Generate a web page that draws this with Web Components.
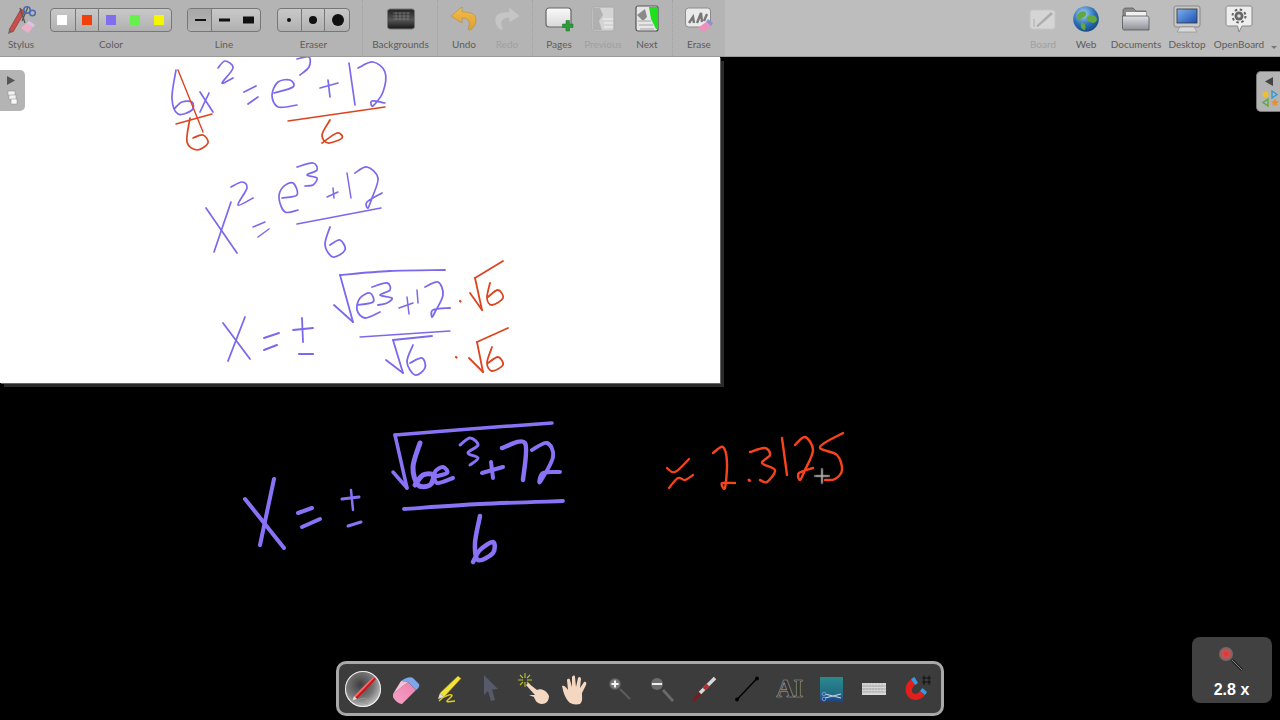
<!DOCTYPE html>
<html lang="en"><head><meta charset="utf-8"><title>OpenBoard</title>
<style>
html,body{margin:0;padding:0;width:1280px;height:720px;overflow:hidden;background:#000}
body{display:flex;flex-direction:column;font-family:Lato,"Open Sans","Liberation Sans",sans-serif}
</style></head><body>
<ob-toolbar>
  <ob-group slot="left" style="--pad:0 13px 0 0">
    <ob-tool label="Stylus" w="42" icon="stylus"></ob-tool>
    <ob-seg label="Color" cells="25,24,73" style="margin-left:8px" sel="-1">
      <ob-swatch c="#fff" x="6"></ob-swatch><ob-swatch c="#f2400c" x="31"></ob-swatch><ob-swatch c="#7f6ff0" x="55"></ob-swatch><ob-swatch c="#66f04c" x="79"></ob-swatch><ob-swatch c="#f6f600" x="103"></ob-swatch>
    </ob-seg>
    <ob-seg label="Line" cells="25,49" style="margin-left:15px" sel="0">
      <ob-swatch c="#111" x="7" w="11" h="2"></ob-swatch><ob-swatch c="#111" x="31" w="11" h="3"></ob-swatch><ob-swatch c="#111" x="55" w="11" h="7"></ob-swatch>
    </ob-seg>
    <ob-seg label="Eraser" cells="25,23,25" style="margin-left:16px" sel="-1">
      <ob-swatch c="#111" x="9" w="4" h="4" r="50%"></ob-swatch><ob-swatch c="#111" x="31" w="8" h="8" r="50%"></ob-swatch><ob-swatch c="#111" x="54" w="12" h="12" r="50%"></ob-swatch>
    </ob-seg>
  </ob-group>
  <ob-group slot="left" sep><ob-tool label="Backgrounds" w="75" icon="backgrounds"></ob-tool></ob-group>
  <ob-group slot="left" sep style="--pad:0 9px 0 0"><ob-tool label="Undo" w="52" icon="undo"></ob-tool><ob-tool label="Redo" w="34" icon="redo" dim></ob-tool></ob-group>
  <ob-group slot="left" sep><ob-tool label="Pages" w="52" icon="pages"></ob-tool><ob-tool label="Previous" w="36" icon="previous" dim></ob-tool><ob-tool label="Next" w="52" icon="next"></ob-tool></ob-group>
  <ob-group slot="left" sep><ob-tool label="Erase" w="52" icon="erase"></ob-tool></ob-group>
  <ob-group slot="right" sep-end>
    <ob-tool label="Board" w="40" icon="board" dim></ob-tool><ob-tool label="Web" w="46" icon="web"></ob-tool><ob-tool label="Documents" w="54" icon="documents"></ob-tool><ob-tool label="Desktop" w="48" icon="desktop"></ob-tool><ob-tool label="OpenBoard" w="56" icon="openboard"></ob-tool><ob-more></ob-more>
  </ob-group>
</ob-toolbar>
<ob-stage>
  <ob-ink></ob-ink>
  <ob-sidetab side="left" icon="pagesTab"></ob-sidetab>
  <ob-sidetab side="right" icon="libTab"></ob-sidetab>
  <ob-dock>
    <ob-dockicon icon="dpen" sel></ob-dockicon><ob-dockicon icon="deraser"></ob-dockicon><ob-dockicon icon="dmarker"></ob-dockicon><ob-dockicon icon="darrow"></ob-dockicon><ob-dockicon icon="dtap"></ob-dockicon><ob-dockicon icon="dhand"></ob-dockicon><ob-dockicon icon="dzin"></ob-dockicon><ob-dockicon icon="dzout"></ob-dockicon><ob-dockicon icon="dlaser"></ob-dockicon><ob-dockicon icon="dline"></ob-dockicon><ob-dockicon icon="dtext"></ob-dockicon><ob-dockicon icon="dcapture"></ob-dockicon><ob-dockicon icon="dkeys"></ob-dockicon><ob-dockicon icon="dmagnet"></ob-dockicon>
  </ob-dock>
  <ob-zoom value="2.8 x"></ob-zoom>
</ob-stage>
<script>
const svg=(w,h,b)=>`<svg xmlns="http://www.w3.org/2000/svg" width="${w}" height="${h}" viewBox="0 0 ${w} ${h}" style="display:block">${b}</svg>`;
const ICONS={
stylus:svg(30,30,`<path d="M3 26 L15 5 L19 7.500 L7 28 Z" fill="#c8504a" stroke="#8a3a38" stroke-width=".7"/><path d="M3 26 L2 30 L6.500 28Z" fill="#666"/><path d="M14 4 L19 19 M22 3 L16 17" stroke="#555" stroke-width="1.300"/><circle cx="21" cy="6" r="3.200" fill="none" stroke="#4a6ab0" stroke-width="1.500"/><circle cx="26.500" cy="9" r="2.800" fill="none" stroke="#4a6ab0" stroke-width="1.500"/><path d="M15 24 L23 17 L29 21 L22 29 Z" fill="#eeb0c8"/><path d="M23 17 L29 21 L27 23 L21 19Z" fill="#d0c8e4"/>`),
backgrounds:svg(30,24,`<defs><linearGradient id="bg" x1="0" y1="0" x2="0" y2="1"><stop offset="0" stop-color="#222"/><stop offset=".55" stop-color="#555"/><stop offset="1" stop-color="#161616"/></linearGradient></defs><rect x="1.500" y="2" width="27" height="20" rx="2.500" fill="url(#bg)" stroke="#777"/><path d="M7 6H24M7 9H24M7 12H23M10 5V13M14 5V13M18 5V13M22 5V13" stroke="#8c8c8c" stroke-width=".5"/>`),
undo:svg(30,28,`<defs><linearGradient id="un" x1="0" y1="0" x2="0" y2="1"><stop offset="0" stop-color="#f4bd48"/><stop offset="1" stop-color="#dca033"/></linearGradient></defs><path d="M13 2 L2 11 L13 18 L13 13 C20 13 22 17 19 24 C20 27 27 22 27 15 C27 8 20 7 13 7 Z" fill="url(#un)" stroke="#b98a35" stroke-width=".6"/>`),
redo:svg(30,28,`<path d="M17 2 L28 11 L17 18 L17 13 C10 13 8 17 11 24 C10 27 3 22 3 15 C3 8 10 7 17 7 Z" fill="#cacaca" stroke="#b4b4b4" stroke-width=".6"/>`),
pages:svg(30,28,`<defs><linearGradient id="pg" x1="0" y1="0" x2="0" y2="1"><stop offset="0" stop-color="#fafafa"/><stop offset="1" stop-color="#d8d8d8"/></linearGradient></defs><rect x="2" y="3" width="25" height="19" rx="3" fill="url(#pg)" stroke="#666" stroke-width="1.200"/><path d="M20.500 19.500h3.500v-3.500h3.500v3.500H31v3.500h-3.500v3.500H24V23h-3.500z" transform="translate(-2 -.5)" fill="#2f9a3a" stroke="#1c6d25" stroke-width=".5"/>`),
previous:svg(26,28,`<rect x="2" y="2" width="22" height="24" rx="2" fill="#dcdcdc" stroke="#a8a8a8"/><path d="M3 3 H10 L13 10 L9 16 L12 25 H3Z" fill="#b0b0b0"/><path d="M13 14H23M14 18H23M14 22H23" stroke="#f6f6f6" stroke-width="1.600"/>`),
next:svg(26,28,`<rect x="2" y="1" width="22" height="25" rx="2" fill="#e6e6e6" stroke="#555" stroke-width="1.200"/><path d="M15 2 H23 V24 H22 L17 14 Z" fill="#1ee01e"/><path d="M3 10 L11 4 L13 12 L9 16Z" fill="#8a8a8a"/><path d="M4 16H17M5 20H19M6 24H20" stroke="#bbb" stroke-width="1.600"/>`),
erase:svg(30,28,`<rect x="1.500" y="3" width="25" height="19" rx="3" fill="#eaeaea" stroke="#8a8a8a"/><path d="M5 18 L9 12 L10 18 M13 18 L17 8 L18 17 M20 16 L23 9" fill="none" stroke="#777" stroke-width="2.400"/><path d="M14 23 L22 17 L27 21 L20 27Z" fill="#ee90bd"/><path d="M22 17 L27 21 L29 18 L24 14Z" fill="#8f8fd8"/>`),
board:svg(28,24,`<rect x="1" y="3" width="25" height="19" rx="2.500" fill="#dcdcdc" stroke="#c8c8c8"/><path d="M7 19 L22 5 L24 7 L9 20Z" fill="#a9a9a9"/><path d="M5 12 V20" stroke="#a9a9a9"/>`),
web:svg(28,28,`<defs><radialGradient id="gl" cx=".4" cy=".3" r=".8"><stop offset="0" stop-color="#a4d4f4"/><stop offset=".55" stop-color="#2c6fb8"/><stop offset="1" stop-color="#123f78"/></radialGradient></defs><circle cx="14" cy="14" r="12.800" fill="url(#gl)"/><path d="M7 8 C11 5 15 6 14 10 C12 13 9 12 8 16 C5 15 4 11 7 8Z M15 12 C19 9 25 10 25 15 C23 19 20 18 18 17 C15 17 14 14 15 12Z M9 18 C12 17 15 20 13 25 C10 25 8 22 9 18Z" fill="#63a83c"/>`),
documents:svg(30,26,`<defs><linearGradient id="fd" x1="0" y1="0" x2="0" y2="1"><stop offset="0" stop-color="#e0e0e6"/><stop offset="1" stop-color="#8f8f98"/></linearGradient></defs><path d="M2 5 C2 3 3 2 5 2 H12 L15 5 H25 V10 H2Z" fill="#8a8a8a" stroke="#555" stroke-width=".7"/><rect x="5" y="6" width="20" height="8" fill="#f0f0f0"/><path d="M1.500 10 H26 C27.500 10 28 11 28 12 V24 H3 C2 24 1.500 23 1.500 22Z" fill="url(#fd)" stroke="#555" stroke-width=".8"/>`),
desktop:svg(28,28,`<rect x="1" y="1" width="26" height="21" rx="2" fill="#c8c8c8" stroke="#888"/><defs><linearGradient id="sc" x1="0" y1="0" x2="1" y2="1"><stop offset="0" stop-color="#7eb1ec"/><stop offset="1" stop-color="#1c4fb0"/></linearGradient></defs><rect x="4" y="4" width="20" height="14" fill="url(#sc)" stroke="#333" stroke-width=".8"/><path d="M7 22 L4 27 H24 L21 22Z" fill="#d8d8d8" stroke="#888" stroke-width=".6"/>`),
openboard:svg(28,28,`<path d="M3 1 H25 C26.500 1 27 2 27 3 V19 C27 20 26.500 21 25 21 H17 L14 27 L12.500 21 H3 C2 21 1 20 1 19 V3 C1 2 2 1 3 1Z" fill="#eee" stroke="#888"/><circle cx="14" cy="11" r="4.500" fill="#666"/><circle cx="14" cy="11" r="6.500" fill="none" stroke="#666" stroke-width="2" stroke-dasharray="2.500 2.600"/><circle cx="14" cy="11" r="1.800" fill="#ddd"/>`),
pagesTab:svg(24,41,`<path d="M7 6 L7 15 L15 10.500Z" fill="#555"/><rect x="8" y="21" width="7" height="4.500" fill="#f2f2f2" stroke="#888" stroke-width=".5"/><rect x="9" y="25" width="7" height="4.500" fill="#f2f2f2" stroke="#888" stroke-width=".5"/><rect x="11" y="29" width="6" height="5" fill="#f8f8f8" stroke="#888" stroke-width=".5"/>`),
libTab:svg(24,41,`<path d="M16 5 L16 14 L8 9.500Z" fill="#444"/><circle cx="8.500" cy="22.500" r="3" fill="#e8c030"/><path d="M15 19 L15 26 L20 22.500Z" fill="none" stroke="#2a9ad8" stroke-width="1.300"/><path d="M11 27 L11 34 L6 30.500Z" fill="none" stroke="#5aa83a" stroke-width="1.300"/><path d="M18 26.500 L19.300 29 L22 29.400 L20 31.300 L20.500 34 L18 32.700 L15.500 34 L16 31.300 L14 29.400 L16.700 29Z" fill="#e8902c"/>`),
dpen:svg(34,34,`<path d="M8 24 L27 5 L30 7 L11 27 Z" fill="#c8151a"/><path d="M27 5 L28.300 6 L9.500 25.500 L8 24Z" fill="#f26a6a"/><path d="M8 24 L6.500 28.500 L11 27Z" fill="#e0e0e0"/><path d="M10 29 C15 26 22 25 21 28 C19 31 15 30 22 32" fill="none" stroke="#999" stroke-width=".9"/>`),
deraser:svg(34,34,`<defs><linearGradient id="er" x1="0" y1="1" x2="1" y2="0"><stop offset="0" stop-color="#f7a2c4"/><stop offset="1" stop-color="#ec7fae"/></linearGradient></defs><path d="M4 22 L19 10 L27 18 L13 32 C10 32 6 29 4 25Z" fill="url(#er)"/><path d="M12 9 C16 6 22 4 24 6 L30 12 C31 14 29 17 27 18 L19 10Z" fill="#7da7e8"/><path d="M19 10 L12 9 L4 22Z" fill="#f6c0d8"/>`),
dmarker:svg(34,34,`<path d="M9 21 L27 4 L30 6.500 L13 25 Z" fill="#f2e23a" stroke="#8f8420" stroke-width=".5"/><path d="M9 21 L7 27 L13 25Z" fill="#ddd"/><path d="M8 29 C15 22 24 21 20 25 C16 29 12 31 24 29" fill="none" stroke="#e6cc20" stroke-width="1.500"/>`),
darrow:svg(34,34,`<path d="M10 3 L24 17 L18 17.500 L21 28 L17 29 L14 19 L10 23Z" fill="#565a6a"/>`),
dtap:svg(36,36,`<g stroke="#b8c030" stroke-width="1.100"><path d="M9 2V7M9 11V16M2 9H7M11 9H16M4 4L7 7M14 4L11 7M4 14L7 11M14 14L11 11"/></g><path d="M12 12 L21 19 C25 17 31 20 33 25 C33 30 30 33 26 33 C21 33 19 29 18 26 L13 24 L19 24 L10 14Z" fill="#f4d8c2"/>`),
dhand:svg(34,34,`<path d="M9 29 C5 24 4 18 3 14 C5 13 7 15 9 18 L8 8 C9 6 11 7 11 8 L13 15 L13 5 C14 3 16 3 16 5 L17 15 L19 6 C20 4 22 5 22 7 L21 16 L25 10 C27 9 28 11 27 13 L23 21 C23 26 24 29 21 32 C16 33 11 32 9 29Z" fill="#f3d7c0"/>`),
dzin:svg(34,34,`<circle cx="13" cy="12" r="5.500" fill="#777" stroke="#555"/><path d="M13 8.500V15.500M9.500 12H16.500" stroke="#f4f4f4" stroke-width="2"/><path d="M18 17 L28 27" stroke="#5c5c5c" stroke-width="2.200"/>`),
dzout:svg(34,34,`<circle cx="13" cy="12" r="6" fill="#6c6c6c"/><path d="M8 12H18" stroke="#eee" stroke-width="2"/><path d="M19 18 L29 29" stroke="#6a6a6a" stroke-width="2.800"/>`),
dlaser:svg(34,34,`<path d="M6 29 L15 19" stroke="#7a1c1c" stroke-width="3"/><path d="M13 21 L28 6" stroke="#d8d8d8" stroke-width="3.500"/><path d="M17 17 L21 13" stroke="#b03030" stroke-width="3.500"/>`),
dline:svg(34,34,`<path d="M7 27.500 L27 6.500" stroke="#000" stroke-width="1.400"/><circle cx="7" cy="27.500" r="1.900" fill="#000"/><circle cx="27" cy="6.500" r="1.900" fill="#000"/>`),
dtext:`<span style="display:block;font:bold 25px/34px 'Liberation Serif',serif;color:#333;-webkit-text-stroke:.6px #a0a0a0;text-align:center;width:34px;letter-spacing:-1px">AI</span>`,
dcapture:svg(34,34,`<defs><linearGradient id="cp" x1="0" y1="0" x2="0" y2="1"><stop offset="0" stop-color="#2a8a90"/><stop offset=".7" stop-color="#226a80"/><stop offset="1" stop-color="#1f3f88"/></linearGradient></defs><rect x="5" y="5" width="23" height="25" fill="url(#cp)"/><path d="M10 26 L26 22 M10 22 L26 26" stroke="#c8d4e8" stroke-width="1.100"/><circle cx="9" cy="27" r="1.800" fill="none" stroke="#8090d8"/><circle cx="9" cy="22" r="1.800" fill="none" stroke="#8090d8"/>`),
dkeys:svg(34,34,`<rect x="5" y="11" width="24" height="12" fill="#d8d8d8"/><path d="M5 14H29M5 17H29M5 20H29" stroke="#999" stroke-width=".7"/><path d="M7 11V20M10 11V20M13 11V20M16 11V20M19 11V20M22 11V20M25 11V20" stroke="#999" stroke-width=".5" stroke-dasharray="1.500 1"/>`),
dmagnet:svg(34,34,`<path d="M12 7 C6 10 4 17 7 23 C11 30 21 29 25 23 L20 19 C18 22 15 23 13 21 C11 19 12 15 15 13Z" fill="#e1201c"/><path d="M11 7 L15 13 L18 11 L14.500 5Z" fill="#3a9ae0"/><path d="M20 19 L25 23 L27 20 L22.500 16Z" fill="#3a9ae0"/><path d="M22 6H31M22 10H31M24 3.500V13M29 3.500V13" stroke="#111" stroke-width="1"/>`),
hudGlass:svg(40,40,`<defs><radialGradient id="hg"><stop offset="0" stop-color="#f02a2a"/><stop offset=".5" stop-color="#c85050"/><stop offset="1" stop-color="#6a6a6a"/></radialGradient></defs><circle cx="14" cy="13" r="7" fill="url(#hg)"/><path d="M20 19 L30 29" stroke="#222" stroke-width="3"/><path d="M20 19 L30 29" stroke="#888" stroke-width="1"/>`)
};
function def(name,css,html,init){
  customElements.define(name,class extends HTMLElement{
    connectedCallback(){
      if(this.shadowRoot)return;
      const r=this.attachShadow({mode:'open'});
      r.innerHTML=`<style>${css}</style>${typeof html==='function'?html(this):html}`;
      if(init)init(this,r);
    }
  });
}
def('ob-toolbar',`:host{display:flex;flex:0 0 57px;height:57px;box-sizing:border-box;background:#bdbdbd;border-bottom:1px solid #999;color:#555}
.l{display:flex;background:#b4b4b4}.s{flex:1}.r{display:flex}`,
`<div class="l"><slot name="left"></slot></div><div class="s"></div><div class="r"><slot name="right"></slot></div>`);
def('ob-group',`:host{display:flex;height:56px;padding:var(--pad,0);box-sizing:border-box}
:host([sep]){border-left:1px dotted #a2a2a2;margin-left:-1px}
:host([sep]:last-of-type){border-right:1px dotted #a2a2a2}`,`<slot></slot>`);
def('ob-tool',`:host{display:flex;flex-direction:column;align-items:center;height:56px;width:var(--w);font-size:10px;line-height:14px;color:#5c5c5c;white-space:nowrap}
:host([dim]){color:#a0a0a0}.i{height:30px;margin-top:4px;display:flex;align-items:center;justify-content:center}
:host([dim]) .i{opacity:.8}.t{margin-top:3px;display:flex;justify-content:center;width:100%}`,
e=>`<div class="i">${ICONS[e.getAttribute('icon')]}</div><div class="t">${e.getAttribute('label')}</div>`,
e=>e.style.setProperty('--w',e.getAttribute('w')+'px'));
def('ob-seg',`:host{display:flex;flex-direction:column;align-items:center;height:56px;font-size:10px;line-height:14px;color:#5c5c5c}
.b{margin-top:8px;height:24px;box-sizing:border-box;border:1px solid #777;border-radius:4px;position:relative;display:flex;overflow:hidden;background:linear-gradient(#c8c8c8,#bcbcbc 55%,#b0b0b0)}
.c{border-right:1px solid #777;box-sizing:border-box;height:100%}.c:last-of-type{border-right:0}
.c.on{background:linear-gradient(#a8a8a8,#b4b4b4)}.t{margin-top:5px}`,
e=>{const cs=e.getAttribute('cells').split(',').map(Number),sel=+e.getAttribute('sel');const tot=cs.reduce((a,b)=>a+b,0);
return `<div class="b" style="width:${tot}px">${cs.map((w,i)=>`<div class="c${i===sel?' on':''}" style="width:${w}px"></div>`).join('')}<slot></slot></div><div class="t">${e.getAttribute('label')}</div>`});
def('ob-swatch',`:host{position:absolute;top:50%;left:var(--x);width:var(--sw);height:var(--sh);background:var(--c);border-radius:var(--r);transform:translateY(-50%)}`,``,
e=>{const g=a=>e.getAttribute(a);const w=g('w')||10,h=g('h')||10;e.style.cssText=`--x:${g('x')-0}px;--sw:${w}px;--sh:${h}px;--c:${g('c')};--r:${g('r')||0}`});
def('ob-more',`:host{display:flex;width:13px;height:56px;align-items:flex-end;justify-content:center;padding-bottom:7px;box-sizing:border-box}
i{display:block;width:0;height:0;border:3.500px solid transparent;border-top:3.500px solid #777;border-bottom:0}`,`<i></i>`);
def('ob-stage',`:host{display:block;position:relative;flex:1;background:#000;overflow:hidden}
.page{position:absolute;left:0;top:0;width:720px;height:325.500px;background:#fff;box-shadow:1px 1px 0 #666,4px 4px 0 #2a2a2a}`,
`<div class="page"></div><slot></slot>`);
const P='#7b69ec',R='#dc4420',P2='#8a72f6',R2='#f8431c';
const STROKES=[
[P,1.7,[[176,70],[172,98],[178,114],[192,110],[192,102],[182,102],[175,108]]],
[P,1.7,[[200,92],[213,112]]],[P,1.7,[[209,93],[200,112]]],
[P,1.7,[[218,68],[225,61],[233,68],[222,83],[233,78]]],
[P,1.7,[[244,92],[256,86]]],[P,1.7,[[248,104],[258,97]]],
[P,1.7,[[274,93],[293,87],[290,80],[278,82],[272,95],[278,107],[297,105]]],
[P,1.7,[[297,59],[309,57],[309,67],[300,75]]],
[P,1.7,[[320,88],[338,83]]],[P,1.7,[[328,80],[330,97]]],[P,1.7,[[349,63],[355,105]]],
[P,1.7,[[358,68],[373,62],[385,72],[383,92],[373,106],[372,101],[385,103]]],
[R,1.4,[[176,124],[212,114]]],[R,1.4,[[178,70],[203,132]]],
[R,1.7,[[190,118],[187,142],[197,150],[208,143],[203,135],[193,138]]],
[R,1.4,[[288,121],[385,107]]],
[R,1.7,[[330,120],[322,135],[328,143],[342,138],[337,133],[322,143]]],
[P,1.7,[[206,208],[237,253]]],[P,1.7,[[231,202],[214,252]]],
[P,1.7,[[231,187],[242,182],[247,188],[238,205],[253,198]]],
[P,1.500,[[253,227],[265,222]]],[P,1.500,[[258,237],[269,229]]],
[P,1.700,[[282,198],[297,195],[293,183],[283,187],[279,198],[285,212],[298,210]]],
[P,1.700,[[297,167],[313,163],[317,170],[307,175],[317,178],[313,185],[305,186]]],
[P,1.500,[[327,197],[338,192]]],[P,1.500,[[333,188],[334,198]]],[P,1.500,[[347,173],[351,198]]],
[P,1.700,[[355,173],[367,167],[378,178],[372,198],[368,208],[367,202],[382,193]]],
[P,1.700,[[297,224],[381,208]]],
[P,1.800,[[330,227],[325,245],[333,257],[345,250],[340,240],[330,245]]],
[P,1.800,[[223,323],[250,359]]],[P,1.800,[[245,317],[228,361]]],
[P,2,[[264,338],[279,333]]],[P,2,[[264,350],[277,345]]],
[P,1.800,[[293,330],[313,328]]],[P,1.800,[[302,318],[303,342]]],[P,2.200,[[299,354],[313,354]]],
[P,1.800,[[334,305],[353,322]]],[P,1.800,[[353,322],[340,275]]],[P,1.800,[[340,275],[390,271],[445,270]]],
[P,1.800,[[357,305],[373,302],[370,293],[360,298],[357,310],[365,318],[380,312]]],
[P,1.800,[[372,287],[387,283],[390,290],[380,295],[392,298],[387,303],[378,305]]],
[P,1.500,[[399,308],[413,303]]],[P,1.500,[[407,297],[409,314]]],[P,1.500,[[417,290],[418,303]]],
[P,1.800,[[425,287],[438,282],[443,295],[435,312],[432,317],[433,310],[450,308]]],
[R,2.200,[[460,301],[460.500,301.500]]],
[R,1.800,[[470,293],[482,310]]],[R,1.800,[[482,310],[475,278]]],[R,1.800,[[475,278],[503,261]]],
[R,1.800,[[490,283],[487,298],[492,305],[503,298],[498,290],[488,297]]],
[P,1.300,[[360,337],[450,331]]],
[P,1.800,[[386,360],[403,373]]],[P,1.800,[[403,373],[393,340]]],[P,1.800,[[393,340],[432,336]]],
[P,1.800,[[413,345],[407,362],[415,375],[425,368],[422,358],[410,363]]],
[R,2.200,[[456,357],[456.500,357.500]]],
[R,1.800,[[469,358],[483,372]]],[R,1.800,[[483,372],[477,342]]],[R,1.800,[[477,342],[508,328]]],
[R,1.800,[[492,347],[487,363],[492,371],[503,365],[498,357],[488,363]]],
[P2,4,[[245,499],[284,548]]],[P2,4,[[274,479],[260,545]]],
[P2,4,[[298,513],[312,508]]],[P2,4,[[302,527],[320,519]]],
[P2,3,[[342,499],[359,497]]],[P2,2.500,[[351,490],[353,510]]],[P2,3,[[348,526],[361,522]]],
[P2,3.500,[[393,472],[407,488]]],[P2,3.500,[[407,488],[395,435]]],[P2,3.500,[[395,435],[470,429],[552,423]]],
[P2,5,[[420,443],[413,467],[418,485],[430,485],[433,475],[423,475],[415,485]]],
[P2,4,[[433,477],[447,473],[443,467],[435,472],[437,483],[453,478]]],
[P2,3,[[460,445],[470,438],[478,445],[468,453],[478,458],[470,465]]],
[P2,4,[[482,473],[503,467]]],[P2,4,[[491,462],[493,478]]],
[P2,4.500,[[502,448],[525,443],[523,480]]],
[P2,4,[[532,450],[547,443],[553,457],[540,482],[543,473],[560,472]]],
[P2,3.800,[[404,509],[480,504],[563,501]]],
[P2,4.500,[[480,516],[475,543],[478,560],[493,553],[493,542],[480,550],[473,562]]],
[R2,2.200,[[667,468],[675,472],[689,459]]],[R2,2.200,[[669,488],[678,478],[685,480],[693,475]]],
[R2,2.400,[[713,453],[723,447],[727,463],[725,488],[722,483],[735,483]]],
[R2,3,[[749,480],[749.500,480.500]]],
[R2,2.400,[[750,452],[765,448],[770,455],[762,463],[775,470],[767,482],[760,480]]],
[R2,2.400,[[782,438],[787,475]]],
[R2,2.400,[[795,445],[805,437],[813,450],[805,470],[800,480],[799,473],[813,468]]],
[R2,2.400,[[843,433],[820,447],[837,455],[842,470],[835,479],[825,480]]]
];
const smooth=p=>{if(p.length<3)return `M${p[0][0]} ${p[0][1]}L${p[1][0]} ${p[1][1]}`;let d=`M${p[0][0]} ${p[0][1]}`;for(let i=0;i<p.length-1;i++){const a=p[Math.max(i-1,0)],b=p[i],c=p[i+1],e=p[Math.min(i+2,p.length-1)];d+=`C${(b[0]+(c[0]-a[0])/6).toFixed(1)} ${(b[1]+(c[1]-a[1])/6).toFixed(1)} ${(c[0]-(e[0]-b[0])/6).toFixed(1)} ${(c[1]-(e[1]-b[1])/6).toFixed(1)} ${c[0]} ${c[1]}`}return d};
def('ob-ink',`:host{position:absolute;left:0;top:0;width:1280px;height:663px;pointer-events:none}svg{display:block}`,
`<svg width="1280" height="663" viewBox="0 57 1280 663" fill="none" stroke-linecap="round" stroke-linejoin="round">${STROKES.map(([c,w,p])=>`<path d="${smooth(p)}" stroke="${c}" stroke-width="${w}"/>`).join('')}
<path d="M815 476H829M822 469V483" stroke="#666" stroke-width="2.500"/><path d="M816 476H828M822 470V482" stroke="#ccc" stroke-width=".8"/></svg>`);
def('ob-sidetab',`:host{position:absolute;top:13px;width:25px;height:41px;background:#b4b4b4;box-sizing:border-box}
:host([side=left]){left:0;border-radius:0 5px 5px 0}
:host([side=right]){right:0;top:14px;width:24px;background:#b4b4b4;border-radius:5px 0 0 5px;border:1px solid #777;border-right:0}`,
e=>ICONS[e.getAttribute('icon')]);
def('ob-dock',`:host{position:absolute;left:336px;bottom:4px;width:608px;height:55px;box-sizing:border-box;background:#3c3c3c;border:3.500px solid #a8a8a8;border-radius:10px;display:flex;align-items:center;padding:0 0 0 3px}`,`<slot></slot>`);
def('ob-dockicon',`:host{display:flex;align-items:center;justify-content:center;width:42.600px;height:42px;flex:none}
.s{width:36px;height:36px;border-radius:50%;display:flex;align-items:center;justify-content:center;background:radial-gradient(circle at 42% 38%,#3e3e3e 0,#777 45%,#d4d4d4 82%,#f0f0f0 100%);box-shadow:inset 0 0 0 1px #f0f0f0}`,
e=>e.hasAttribute('sel')?`<div class="s">${ICONS[e.getAttribute('icon')]}</div>`:ICONS[e.getAttribute('icon')]);
def('ob-zoom',`:host{position:absolute;left:1192px;top:580px;width:80px;height:66px;background:#414141;border-radius:8px;color:#fff;display:flex;flex-direction:column;align-items:center;font:bold 16px/18px "Liberation Sans",sans-serif}
.i{height:36px;margin-top:4px;margin-left:0}.t{margin-left:-1px;margin-top:4px}`,
e=>`<div class="i">${ICONS.hudGlass}</div><div class="t">${e.getAttribute('value')}</div>`);
</script>
</body></html>
